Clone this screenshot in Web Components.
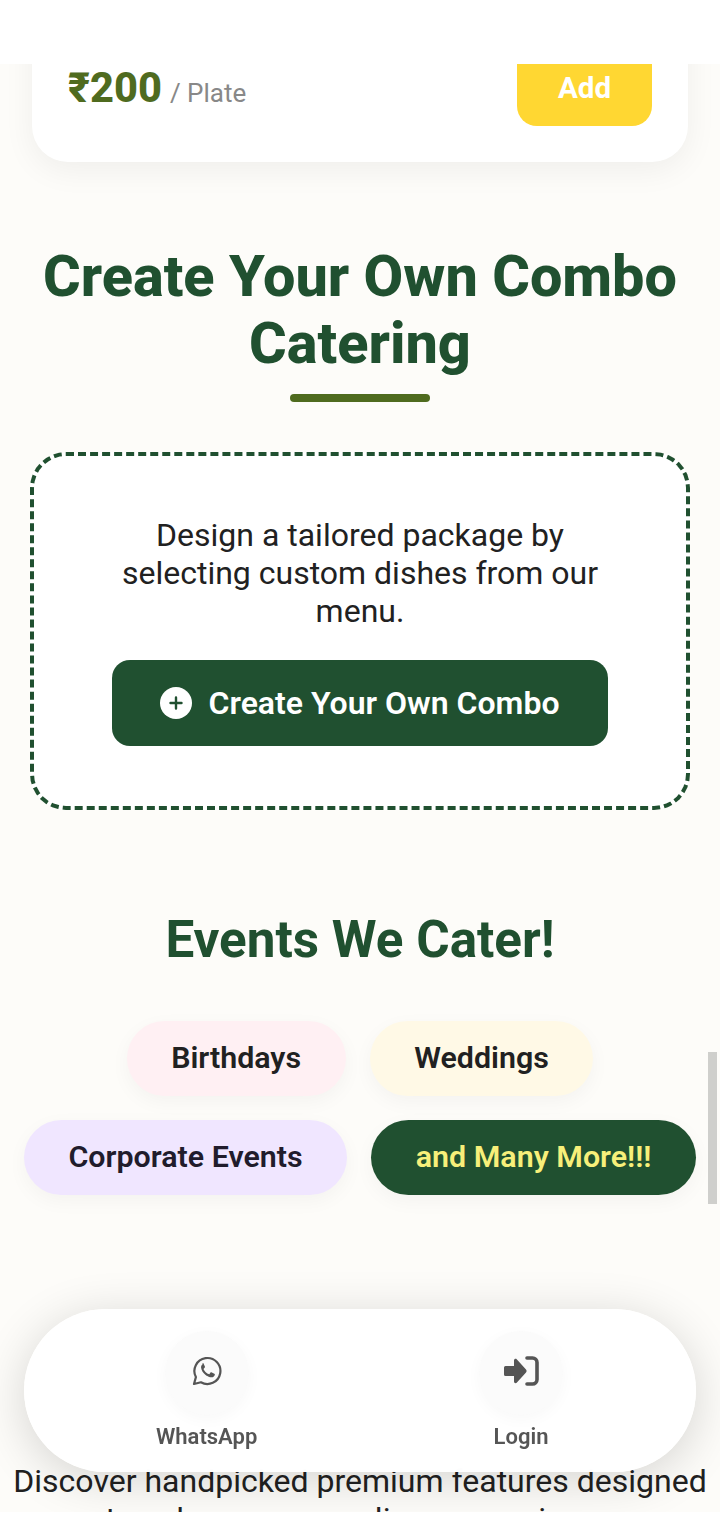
<!DOCTYPE html>
<html lang="en">
<head>
<meta charset="utf-8">
<title>Catering</title>
<style>
  html, body { margin: 0; background: #fff; }
  body { font-family: Roboto, "Noto Sans", sans-serif; color: #212121; }
</style>
</head>
<body>
<app-screen>
  <price-card amount="₹200" unit="/ Plate" action="Add"></price-card>
  <section-title size="big">Create Your Own Combo Catering</section-title>
  <combo-box text="Design a tailored package by selecting custom dishes from our menu." action="Create Your Own Combo"></combo-box>
  <section-title>Events We Cater!</section-title>
  <event-pills>
    <event-pill bg="#fff0f3">Birthdays</event-pill>
    <event-pill bg="#fff9e6">Weddings</event-pill>
    <event-pill bg="#f0e6ff" fg="#211c2c">Corporate Events</event-pill>
    <event-pill bg="#205030" fg="#f7ef7a">and Many More!!!</event-pill>
  </event-pills>
  <features-intro>Discover handpicked premium features designed to enhance your culinary experience</features-intro>
  <bottom-nav slot="overlay"></bottom-nav>
</app-screen>

<script>
class AppScreen extends HTMLElement {
  constructor() {
    super();
    this.attachShadow({ mode: 'open' });
    this.shadowRoot.innerHTML = `
      <style>
        :host { display: block; padding-top: 64px; height: 1448px; padding-bottom: 23px; background: #fff; }
        .view { position: relative; height: 1448px; overflow: hidden; background: #fdfcf9; }
        .bar {
          position: absolute; right: 3px; top: 988px;
          width: 9px; height: 152px; background: #cfcfcc;
        }
      </style>
      <div class="view">
        <slot></slot>
        <slot name="overlay"></slot>
        <div class="bar"></div>
      </div>
    `;
  }
}

class PriceCard extends HTMLElement {
  constructor() {
    super();
    this.attachShadow({ mode: 'open' });
    this.shadowRoot.innerHTML = `
      <style>
        :host {
          display: flex; justify-content: space-between; align-items: flex-start;
          margin: -100px 32px 0; height: 198px; box-sizing: border-box;
          padding: 0 36px; background: #fff; border-radius: 0 0 36px 36px;
          box-shadow: 0 8px 32px rgba(0,0,0,.06);
        }
        .price { margin-top: 100px; display: flex; align-items: baseline; gap: 8px; }
        .amount { font-size: 41.6px; line-height: 48px; font-weight: 800; color: #4f6b1f; }
        .unit { font-size: 26px; color: #888; }
        button {
          width: 135px; height: 162px; border: 0; padding: 86px 0 0; border-radius: 0 0 20px 20px;
          background: #ffd732; color: #fff; font: 700 29.6px Roboto, sans-serif; display: block;
        }
      </style>
      <div class="price">
        <span class="amount">${this.getAttribute('amount')}</span>
        <span class="unit">${this.getAttribute('unit')}</span>
      </div>
      <button>${this.getAttribute('action')}</button>
    `;
  }
}

class SectionTitle extends HTMLElement {
  constructor() {
    super();
    this.attachShadow({ mode: 'open' });
    const big = this.getAttribute('size') === 'big';
    this.shadowRoot.innerHTML = `
      <style>
        :host { display: block; text-align: center; color: #205030; font-weight: 700; }
        h2 { margin: 0; font: inherit; }
        .big { padding: 81px 24px 0; font-size: 57.6px; line-height: 67px; font-weight: 800; }
        .small { padding: 97px 24px 0; font-size: 51.2px; line-height: 66px; }
        .rule { width: 140px; height: 8px; margin: 17px auto 50px; border-radius: 4px; background: #4f6b1f; }
      </style>
      <h2 class="${big ? 'big' : 'small'}"><slot></slot></h2>
      ${big ? '<div class="rule"></div>' : ''}
    `;
  }
}

class ComboBox extends HTMLElement {
  constructor() {
    super();
    this.attachShadow({ mode: 'open' });
    this.shadowRoot.innerHTML = `
      <style>
        :host {
          display: flex; flex-direction: column; align-items: center;
          margin: 0 30px; height: 358px; box-sizing: border-box;
          padding: 60px 72px 0; background: #fff;
          border: 4px dashed #205030; border-radius: 36px;
        }
        p { margin: 0 0 30px; font-size: 32px; line-height: 38px; text-align: center; }
        button {
          width: 496px; height: 86px; flex: none; border: 0; border-radius: 18px;
          background: #205030; color: #fff; font: 600 32px Roboto, sans-serif;
          display: flex; align-items: center; justify-content: center; gap: 16px;
        }
        svg { width: 32px; height: 32px; flex: none; }
      </style>
      <p>${this.getAttribute('text')}</p>
      <button>
        <svg viewBox="0 0 32 32"><circle cx="16" cy="16" r="16" fill="#fff"/><path d="M16 10.500v11M10.500 16h11" stroke="#205030" stroke-width="2.400" stroke-linecap="round"/></svg>
        ${this.getAttribute('action')}
      </button>
    `;
  }
}

class EventPills extends HTMLElement {
  constructor() {
    super();
    this.attachShadow({ mode: 'open' });
    this.shadowRoot.innerHTML = `
      <style>
        :host {
          display: flex; flex-wrap: wrap; justify-content: center; gap: 24px;
          padding: 48px 16px 0;
        }
      </style>
      <slot></slot>
    `;
  }
}

class EventPill extends HTMLElement {
  constructor() {
    super();
    this.attachShadow({ mode: 'open' });
    this.shadowRoot.innerHTML = `
      <style>
        :host {
          display: block; padding: 0 44.6px; height: 75px; line-height: 73px; border-radius: 38px;
          font-size: 30.4px; font-weight: 600; white-space: nowrap;
          background: ${this.getAttribute('bg')}; color: ${this.getAttribute('fg') || '#212121'};
          box-shadow: 0 6px 20px rgba(0,0,0,.04);
        }
      </style>
      <slot></slot>
    `;
  }
}

class FeaturesIntro extends HTMLElement {
  constructor() {
    super();
    this.attachShadow({ mode: 'open' });
    this.shadowRoot.innerHTML = `
      <style>
        :host {
          display: block; margin-top: 267px; padding: 0 12px;
          font-size: 32px; line-height: 38px; text-align: center; color: #212121;
        }
      </style>
      <slot></slot>
    `;
  }
}

class NavItem extends HTMLElement {
  constructor() {
    super();
    this.attachShadow({ mode: 'open' });
    this.shadowRoot.innerHTML = `
      <style>
        :host { display: flex; flex-direction: column; align-items: center; gap: 7px; color: #555; }
        .circle {
          width: 84px; height: 84px; border-radius: 50%; background: #fbfbfb;
          display: flex; align-items: center; justify-content: center;
          box-shadow: 0 4px 16px rgba(0,0,0,.03);
        }
        ::slotted(svg) { margin-top: -4px; }
        .label { font-size: 22px; line-height: 30px; font-weight: 600; }
      </style>
      <div class="circle"><slot></slot></div>
      <div class="label">${this.getAttribute('label')}</div>
    `;
  }
}

class BottomNav extends HTMLElement {
  constructor() {
    super();
    this.attachShadow({ mode: 'open' });
    this.shadowRoot.innerHTML = `
      <style>
        :host {
          position: absolute; left: 24px; right: 24px; bottom: 40px; height: 163px;
          display: flex; justify-content: space-between; align-items: flex-start;
          box-sizing: border-box; padding: 22px 133px 0 132px;
          background: rgba(255,255,255,.98); border-radius: 82px;
          -webkit-backdrop-filter: blur(12px); backdrop-filter: blur(12px);
          box-shadow: 0 8px 48px rgba(0,0,0,.16);
        }
      </style>
      <nav-item label="WhatsApp">
        <svg width="30" height="30" viewBox="0 0 30 30" fill="none">
          <path d="M2 28l1.900-6.900A13 13 0 1 1 8.900 26.300z" stroke="#555" stroke-width="2.200" stroke-linejoin="round"/>
          <path d="M10.600 8.300c-.9.6-1.700 1.900-1.500 3.400.4 2.700 2.100 5.300 4.200 7 1.900 1.600 4.300 2.700 6.400 2.600 1.300-.1 2.500-1 3-2.100.2-.6.2-1 .1-1.200l-3.400-1.700c-.4-.1-.7 0-.9.3l-1 1.300c-.2.3-.5.3-.9.2-2.200-.9-3.900-2.600-4.900-4.700-.1-.3 0-.6.2-.8l.9-1.100c.2-.3.2-.6.1-.9l-1.400-3.200c-.2-.4-.9-.4-.9-.1z" fill="#555"/>
        </svg>
      </nav-item>
      <nav-item label="Login">
        <svg width="36" height="30" viewBox="0 0 36 30" fill="none">
          <path d="M1 11.500a1.500 1.500 0 0 1 1.500-1.500H11V4.500c0-1.500 1.700-2.200 2.700-1.200l9.300 10.200c.8.900.8 2.100 0 3L13.700 26.700c-1 1-2.700.3-2.700-1.200V20H2.500A1.500 1.500 0 0 1 1 18.500z" fill="#555"/>
          <path d="M24 2h5.500A4.500 4.500 0 0 1 34 6.500v17a4.500 4.500 0 0 1-4.500 4.500H24" stroke="#555" stroke-width="3.600" stroke-linecap="round"/>
        </svg>
      </nav-item>
    `;
  }
}

customElements.define('app-screen', AppScreen);
customElements.define('price-card', PriceCard);
customElements.define('section-title', SectionTitle);
customElements.define('combo-box', ComboBox);
customElements.define('event-pills', EventPills);
customElements.define('event-pill', EventPill);
customElements.define('features-intro', FeaturesIntro);
customElements.define('nav-item', NavItem);
customElements.define('bottom-nav', BottomNav);
</script>
</body>
</html>
